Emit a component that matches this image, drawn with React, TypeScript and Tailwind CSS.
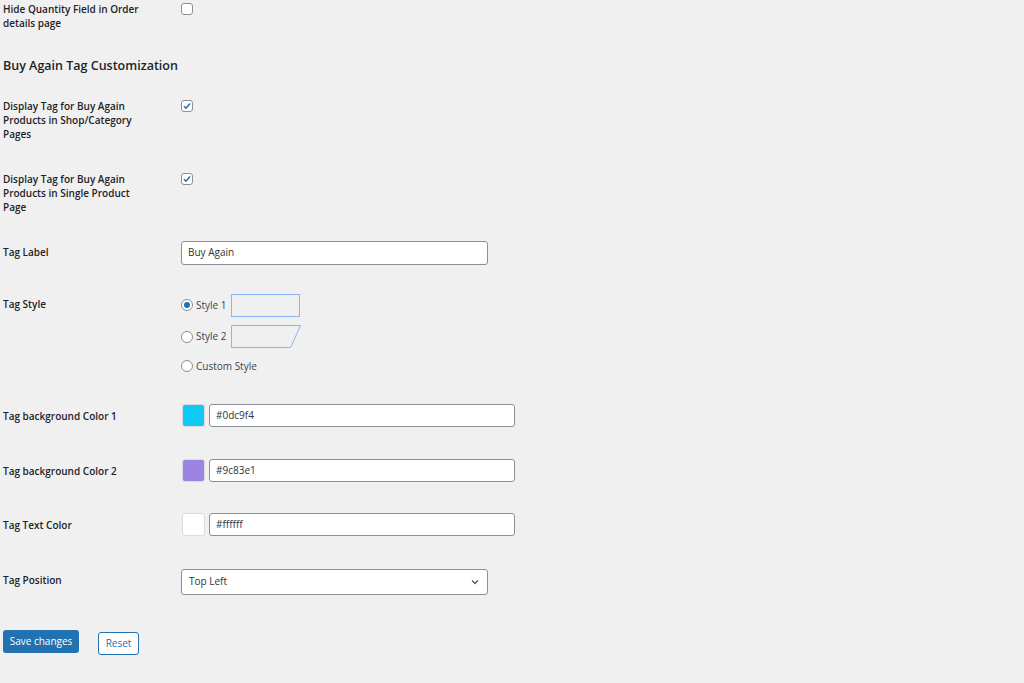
import React from "react";

const Check = ({ checked }: { checked?: boolean }) => (
  <div className="w-[12px] h-[12px] border border-[#8c8f94] rounded-[3px] bg-white flex items-center justify-center">
    {checked && (
      <svg width="10" height="10" viewBox="0 0 10 10"><path d="M2 5.2l2 2 4-4.6" stroke="#2271b1" strokeWidth="1.6" fill="none" /></svg>
    )}
  </div>
);

const Radio = ({ on }: { on?: boolean }) => (
  <div className="w-[12px] h-[12px] rounded-full border border-[#8c8f94] bg-white flex items-center justify-center">
    {on && <div className="w-[6px] h-[6px] rounded-full bg-[#2271b1]" />}
  </div>
);

const Label = ({ children, w = "w-[150px]" }: { children: React.ReactNode; w?: string }) => (
  <div className={`${w} shrink-0 font-semibold text-[10px] leading-[14px] text-[#1d2327]`}>{children}</div>
);

const ColorRow = ({ label, color, mt }: { label: string; color: string; mt: string }) => (
  <div className={`flex ${mt}`}>
    <div className="w-[179px] pt-[5px]"><Label>{label}</Label></div>
    <div className="flex gap-[4px]">
      <div className="w-[23px] h-[23px] rounded-[3px] border border-[#dcdcde]" style={{ background: color }} />
      <div className="w-[306px] h-[23px] bg-white border border-[#8c8f94] rounded-[3px] px-[6px] flex items-center text-[10px] text-[#2c3338]">{color}</div>
    </div>
  </div>
);

export default function App() {
  return (
    <div className="w-[1024px] h-[683px] bg-[#f0f0f1] pl-[3px] pt-[1px] text-[#1d2327]" style={{ fontFamily: '"Open Sans", "Noto Sans", sans-serif' }}>
      <div className="flex">
        <div className="w-[178px] pt-[1px]"><Label w="w-[145px]">Hide Quantity Field in Order details page</Label></div>
        <div className="pt-[2px]"><Check /></div>
      </div>
      <div className="mt-[27px] text-[12.5px] font-semibold">Buy Again Tag Customization</div>
      <div className="flex mt-[23px]">
        <div className="w-[178px]"><Label w="w-[140px]">Display Tag for Buy Again Products in Shop/Category Pages</Label></div>
        <div className="pt-[1px]"><Check checked /></div>
      </div>
      <div className="flex mt-[31px]">
        <div className="w-[178px]"><Label w="w-[140px]">Display Tag for Buy Again Products in Single Product Page</Label></div>
        <div className="pt-[1px]"><Check checked /></div>
      </div>
      <div className="flex mt-[27px]">
        <div className="w-[178px] pt-[4px]"><Label>Tag Label</Label></div>
        <div className="w-[307px] h-[24px] bg-white border border-[#8c8f94] rounded-[3px] px-[6px] flex items-center text-[10px] text-[#2c3338]">Buy Again</div>
      </div>
      <div className="flex mt-[29px]">
        <div className="w-[178px] pt-[3px]"><Label>Tag Style</Label></div>
        <div className="flex flex-col gap-[8px]">
          <div className="flex items-center gap-[3px] text-[10px] text-[#3c434a]">
            <Radio on /><span>Style 1</span>
            <div className="w-[69px] h-[23px] border border-[#8ab4f8] ml-[1px]" />
          </div>
          <div className="flex items-center gap-[3px] text-[10px] text-[#3c434a]">
            <Radio /><span>Style 2</span>
            <svg width="71" height="24" className="ml-[1px]"><path d="M0.5 0.5H69.5L59.5 22.5H0.5Z" fill="none" stroke="#8ab4f8" /></svg>
          </div>
          <div className="flex items-center gap-[3px] text-[10px] text-[#3c434a] mt-[2px]">
            <Radio /><span>Custom Style</span>
          </div>
        </div>
      </div>
      <ColorRow label="Tag background Color 1" color="#0dc9f4" mt="mt-[30px]" />
      <ColorRow label="Tag background Color 2" color="#9c83e1" mt="mt-[32px]" />
      <ColorRow label="Tag Text Color" color="#ffffff" mt="mt-[31px]" />
      <div className="flex mt-[33px]">
        <div className="w-[178px] pt-[4px]"><Label>Tag Position</Label></div>
        <div className="w-[307px] h-[26px] bg-white border border-[#8c8f94] rounded-[3px] px-[7px] flex items-center justify-between text-[10px] text-[#2c3338]">
          <span>Top Left</span>
          <svg width="10" height="10" viewBox="0 0 10 10"><path d="M2 3.5l3 3 3-3" stroke="#50575e" strokeWidth="1.3" fill="none" /></svg>
        </div>
      </div>
      <div className="flex items-start mt-[35px]">
        <div className="w-[76px] h-[23px] bg-[#2271b1] rounded-[3px] text-white text-[10px] flex items-center justify-center">Save changes</div>
        <div className="ml-[19px] mt-[2px] w-[41px] h-[23px] bg-white border border-[#2271b1] rounded-[3px] text-[#2271b1] text-[10px] flex items-center justify-center">Reset</div>
      </div>
    </div>
  );
}
